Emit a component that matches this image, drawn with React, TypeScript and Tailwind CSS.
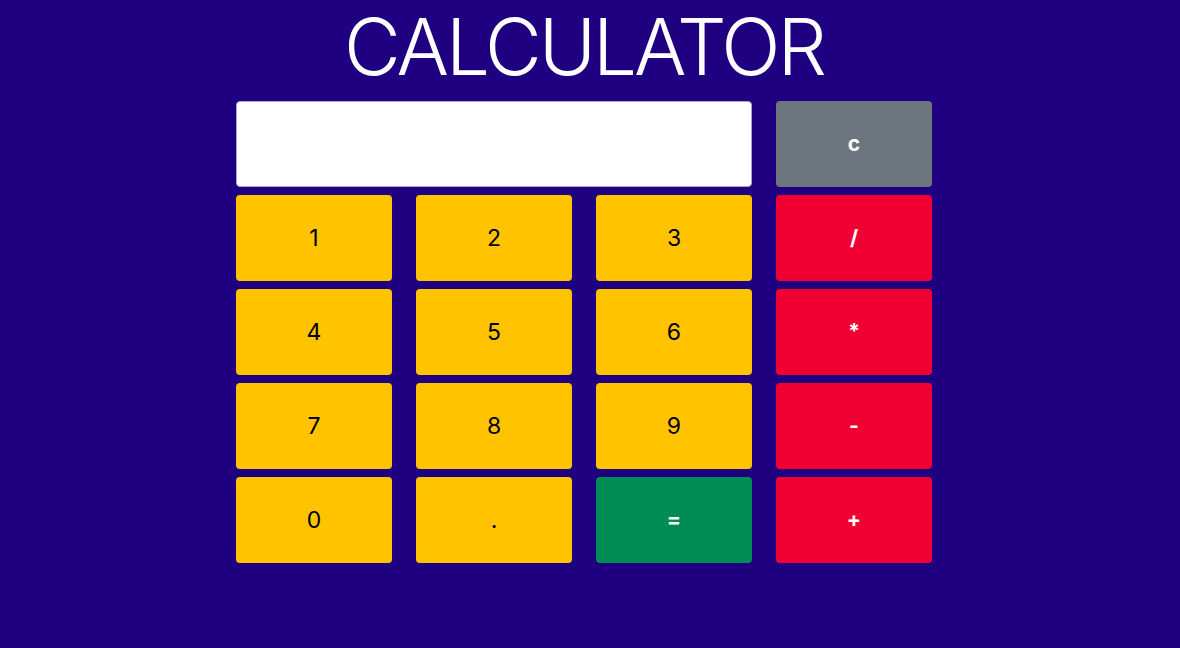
import React from 'react';

const digit = 'bg-[#ffc300] text-black text-[23px] font-normal';
const op = 'bg-[#f10033] text-white text-[21px] font-bold';

export default function App() {
  const keys: { label: string; cls: string }[] = [
    { label: '1', cls: digit },
    { label: '2', cls: digit },
    { label: '3', cls: digit },
    { label: '/', cls: op },
    { label: '4', cls: digit },
    { label: '5', cls: digit },
    { label: '6', cls: digit },
    { label: '*', cls: op },
    { label: '7', cls: digit },
    { label: '8', cls: digit },
    { label: '9', cls: digit },
    { label: '-', cls: op },
    { label: '0', cls: digit },
    { label: '.', cls: digit },
    { label: '=', cls: 'bg-[#008d55] text-white text-[21px] font-bold' },
    { label: '+', cls: op },
  ];

  return (
    <div className="min-h-screen w-full bg-[#1f0080] font-['Inter',sans-serif]">
      <div className="w-[1168px] flex flex-col items-center">
        <h1 className="text-white text-[78px] font-light leading-[90px] tracking-[-3px] pt-[2px]">CALCULATOR</h1>
        <div className="grid grid-cols-[156px_156px_156px_156px] gap-x-[24px] gap-y-[8px] auto-rows-[86px] mt-[9px]">
          <input
            readOnly
            className="col-span-3 bg-white rounded-[4px] border border-[#a9a3d6] outline-none px-3 text-2xl"
          />
          <button className="bg-[#6c757d] text-white text-[21px] font-bold rounded-[4px]">c</button>
          {keys.map((k) => (
            <button key={k.label} className={`${k.cls} rounded-[4px] flex items-center justify-center`}>
              {k.label}
            </button>
          ))}
        </div>
      </div>
    </div>
  );
}
